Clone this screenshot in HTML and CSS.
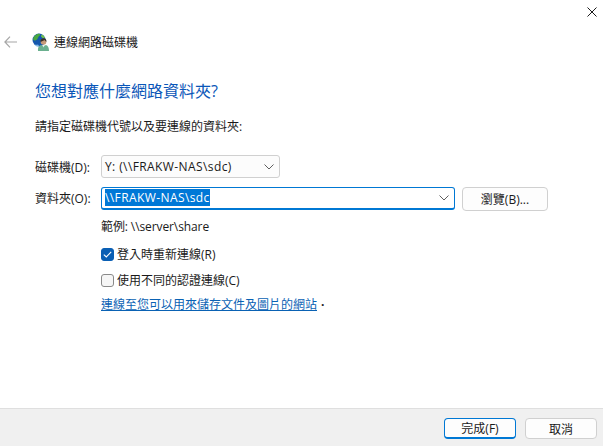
FILE: index.html
```html
<!DOCTYPE html>
<html lang="zh-Hant">
<head>
    <meta charset="UTF-8">
    <meta name="viewport" content="width=device-width, initial-scale=1.0">
    <title>連線網路磁碟機</title>
    <link rel="stylesheet" href="styles.css">
</head>
<body>

<div class="dialog">
    <div class="titlebar">
        <svg class="close-icon" width="10" height="10" viewBox="0 0 10 10"><path d="M.5.5l9 9M9.5.5l-9 9" stroke="#1a1a1a" fill="none"/></svg>
    </div>

    <div class="nav">
        <svg class="back-icon" width="13" height="12" viewBox="0 0 13 12"><path d="M6 .7L.9 6 6 11.300M1 6h12" stroke="#a6a6a6" stroke-width="1.200" fill="none"/></svg>
        <svg class="wizard-icon" width="18" height="18" viewBox="0 0 18 18">
            <circle cx="7" cy="7" r="6.500" fill="#1557ad"/>
            <path d="M3 2.500C4.500 1.200 6 .8 7.500.8c1 .8.500 1.800-.5 2.500S6 5.500 5 6.500 2.500 8 1.500 7 1.800 3.600 3 2.500z" fill="#49a83f"/>
            <path d="M9.500 1.500c1.800.5 3 2 3.500 3.500l-2 .5-2-2z" fill="#6fbf4a"/>
            <path d="M3 11c1 1 2 1 3 .5l1 1.500-2 .5C4 13.500 3.500 12 3 11z" fill="#7fb8e8"/>
            <path d="M6 18c-.5-3.500 1-5.500 3-6l2.500 1 2.500-1c2 .5 3 2.500 3 6z" fill="#6bb08f"/>
            <path d="M10.500 12.500l1 2 1-2z" fill="#e6f0ea"/>
            <circle cx="11.500" cy="9" r="2.800" fill="#c79a78"/>
            <path d="M8.500 9c-.3-2.500 1.300-3.700 3-3.700s3.200 1 3 3.500c-.8-.3-1.500-1.200-2-1.800-.8.800-2.500 1-4 2z" fill="#3d3128"/>
        </svg>
        <span class="nav-title">連線網路磁碟機</span>
    </div>

    <div class="content">
        <h1 class="heading">您想對應什麼網路資料夾?</h1>
        <p class="intro">請指定磁碟機代號以及要連線的資料夾:</p>

        <div class="form-row drive-row">
            <label class="field-label">磁碟機(D):</label>
            <div class="combo drive-combo">
                <span class="combo-text">Y: (\\FRAKW-NAS\sdc)</span>
                <svg width="10" height="6" viewBox="0 0 10 6"><path d="M.5.500L5 5 9.500.500" stroke="#5f5f5f" fill="none"/></svg>
            </div>
        </div>

        <div class="form-row folder-row">
            <label class="field-label">資料夾(O):</label>
            <div class="combo folder-combo">
                <span class="combo-text selected-text">\\FRAKW-NAS\sdc</span>
                <svg width="10" height="6" viewBox="0 0 10 6"><path d="M.5.500L5 5 9.500.500" stroke="#5f5f5f" fill="none"/></svg>
            </div>
            <button class="btn browse-btn">瀏覽(B)...</button>
        </div>

        <div class="options">
            <div class="example">範例: \\server\share</div>
            <div class="check-row">
                <span class="checkbox checked">
                    <svg width="9" height="7" viewBox="0 0 9 7"><path d="M.8 3.600l2.500 2.400L8.200.8" stroke="#fff" stroke-width="1.100" fill="none"/></svg>
                </span>
                登入時重新連線(R)
            </div>
            <div class="check-row">
                <span class="checkbox"></span>
                使用不同的認證連線(C)
            </div>
            <div class="link-row"><a class="site-link" href="#">連線至您可以用來儲存文件及圖片的網站</a><span class="link-dot">·</span></div>
        </div>
    </div>

    <div class="footer">
        <button class="btn footer-btn default-btn">完成(F)</button>
        <button class="btn footer-btn">取消</button>
    </div>
</div>

</body>
</html>
```

FILE: styles.css
```css
html, body {
    margin: 0;
    padding: 0;
    height: 100%;
}
body {
    font-family: "Open Sans", "Noto Sans CJK TC", sans-serif;
    font-size: 12px;
    color: #1a1a1a;
    background-color: white;
    overflow: hidden;
}
.dialog {
    display: flex;
    flex-direction: column;
    width: 603px;
    height: 446px;
}
.titlebar {
    display: flex;
    justify-content: flex-end;
    height: 33px;
    padding: 7px 6px 0 0;
    box-sizing: border-box;
}
.nav {
    display: flex;
    align-items: center;
    height: 18px;
    padding-left: 4px;
}
.back-icon {
    margin-right: 15px;
}
.wizard-icon {
    margin-right: 4px;
}
.nav-title {
    font-size: 12px;
}
.content {
    flex: 1;
    padding-left: 35px;
}
.heading {
    margin: 29px 0 0;
    font-size: 16px;
    line-height: 22px;
    font-weight: normal;
    color: #0a56b8;
}
.intro {
    margin: 16px 0 0;
    line-height: 18px;
}
.form-row {
    display: flex;
    align-items: center;
}
.drive-row {
    margin-top: 19px;
}
.folder-row {
    margin-top: 7px;
}
.field-label {
    width: 66px;
    flex-shrink: 0;
}
.combo {
    display: flex;
    align-items: center;
    justify-content: space-between;
    height: 23px;
    box-sizing: border-box;
    border: 1px solid #d0d0d0;
    border-radius: 3px;
    padding: 0 5px 0 3px;
    background-color: white;
}
.combo-text {
    letter-spacing: .4px;
}
.drive-combo {
    width: 179px;
    background-color: #fcfcfc;
}
.folder-combo {
    width: 354px;
    border: 1px solid #0078d4;
    border-bottom-width: 2px;
    padding-left: 3px;
}
.selected-text {
    background-color: #0078d7;
    color: white;
    line-height: 17px;
}
.btn {
    font-family: inherit;
    font-size: 12px;
    color: #1a1a1a;
    background-color: #fdfdfd;
    border: 1px solid #d0d0d0;
    border-radius: 4px;
    padding: 0;
    cursor: pointer;
}
.browse-btn {
    width: 86px;
    height: 24px;
    margin: 2px 0 0 7px;
}
.options {
    padding-left: 66px;
}
.example {
    margin-top: 6px;
    line-height: 20px;
    letter-spacing: -.1px;
}
.check-row {
    display: flex;
    align-items: center;
    gap: 3px;
    height: 14px;
    margin-top: 6px;
}
.options .check-row + .check-row {
    margin-top: 12px;
}
.example + .check-row {
    margin-top: 10px;
}
.checkbox {
    display: flex;
    align-items: center;
    justify-content: center;
    width: 13px;
    height: 13px;
    box-sizing: border-box;
    border: 1px solid #8a8a8a;
    border-radius: 3px;
    background-color: #f6f6f6;
}
.checkbox.checked {
    background-color: #0a5fb4;
    border-color: #0a5fb4;
}
.link-row {
    margin-top: 9px;
    line-height: 18px;
}
.site-link {
    color: #0a62b4;
}
.link-dot {
    margin-left: 4px;
    font-weight: bold;
}
.footer {
    display: flex;
    justify-content: flex-end;
    gap: 9px;
    height: 38px;
    padding: 9px 6px 0 0;
    box-sizing: border-box;
    background-color: #f0f0f0;
    border-top: 1px solid #dfdfdf;
}
.footer-btn {
    width: 72px;
    height: 21px;
}
.default-btn {
    border: 1px solid #0078d4;
    border-bottom-width: 2px;
    background-color: #fdfdfd;
}
```
